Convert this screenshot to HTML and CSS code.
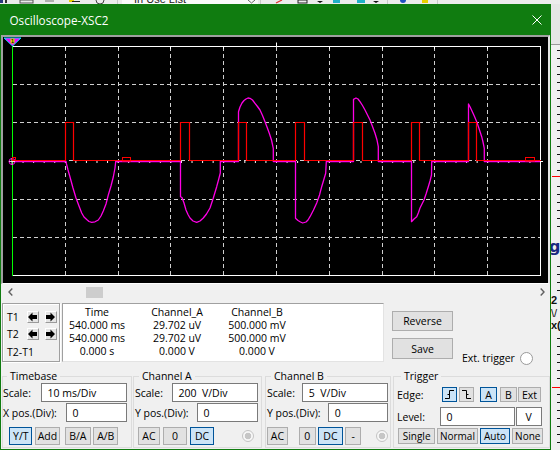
FILE: index.html
```html
<!DOCTYPE html>
<html>
<head>
<meta charset="utf-8">
<title>Oscilloscope-XSC2</title>
<link rel="stylesheet" href="styles.css">
</head>
<body>
<svg class="toolbar-strip" width="560" height="4" viewBox="0 0 560 4">
  <rect width="560" height="4" fill="#ececec"/>
  <rect x="0" y="0" width="3" height="3" fill="#2a3a7a"/>
  <rect x="5" y="0" width="2" height="3" fill="#333"/>
  <rect x="20" y="0" width="13" height="3" fill="none" stroke="#555" stroke-width="1"/>
  <rect x="45" y="0" width="9" height="2" fill="#b0b0b0"/>
  <rect x="69" y="0" width="5" height="2" fill="#e8d000"/>
  <rect x="72" y="1" width="8" height="1" fill="#222"/>
  <circle cx="100" cy="0" r="4" fill="none" stroke="#444" stroke-width="1"/>
  <rect x="117" y="0" width="1" height="4" fill="#c8c8c8"/>
  <rect x="122" y="0" width="136" height="4" fill="#fafafa"/>
  <text x="134" y="3" font-family="Liberation Sans, sans-serif" font-size="11" fill="#222">In Use List</text>
  <path d="M248 0 L251.5 3 L255 0" fill="none" stroke="#666" stroke-width="1"/>
  <rect x="260" y="0" width="1" height="4" fill="#c8c8c8"/>
  <path d="M276 3 L282 0" stroke="#e03030" stroke-width="1.2"/>
  <rect x="298" y="0" width="9" height="3" fill="none" stroke="#222" stroke-width="1"/>
  <path d="M317 1 H323 L320 3 Z" fill="#111"/>
  <rect x="333" y="0" width="7" height="3" fill="#20b0c8"/>
  <rect x="357" y="0" width="8" height="3" fill="#20b0c8"/>
  <path d="M373 1 H379 L376 3 Z" fill="#111"/>
  <rect x="387" y="0" width="1" height="4" fill="#c8c8c8"/>
  <circle cx="403" cy="0" r="3" fill="#2050c0"/>
  <rect x="422" y="0" width="6" height="3" fill="#e8d000"/>
  <rect x="437" y="0" width="1" height="4" fill="#c8c8c8"/>
</svg>

<svg class="bg-app" width="9" height="446" viewBox="551 4 9 446">
  <rect x="551" y="4" width="9" height="446" fill="#f0f0f0"/>
  <rect x="551" y="4" width="9" height="40" fill="#e6e6e6"/>
  <rect x="551" y="44" width="9" height="1" fill="#9a9a9a"/>
  <g fill="#111">
    <rect x="557" y="50" width="3" height="1"/><rect x="557" y="58" width="3" height="1"/>
    <rect x="557" y="66" width="3" height="1"/><rect x="557" y="74" width="3" height="1"/>
    <rect x="557" y="82" width="3" height="1"/><rect x="557" y="90" width="3" height="1"/>
    <rect x="557" y="98" width="3" height="1"/><rect x="557" y="106" width="3" height="1"/>
    <rect x="557" y="114" width="3" height="1"/><rect x="557" y="122" width="3" height="1"/>
    <rect x="557" y="130" width="3" height="1"/><rect x="557" y="138" width="3" height="1"/>
    <rect x="557" y="146" width="3" height="1"/><rect x="557" y="154" width="3" height="1"/>
    <rect x="557" y="162" width="3" height="1"/><rect x="557" y="170" width="3" height="1"/>
    <rect x="557" y="186" width="3" height="1"/><rect x="557" y="194" width="3" height="1"/>
    <rect x="557" y="202" width="3" height="1"/><rect x="557" y="210" width="3" height="1"/>
    <rect x="557" y="218" width="3" height="1"/><rect x="557" y="226" width="3" height="1"/>
    <rect x="557" y="266" width="3" height="1"/><rect x="557" y="274" width="3" height="1"/>
    <rect x="557" y="282" width="3" height="1"/><rect x="557" y="290" width="3" height="1"/>
    <rect x="557" y="338" width="3" height="1"/><rect x="557" y="346" width="3" height="1"/>
    <rect x="557" y="354" width="3" height="1"/><rect x="557" y="362" width="3" height="1"/>
    <rect x="557" y="370" width="3" height="1"/><rect x="557" y="378" width="3" height="1"/>
    <rect x="557" y="394" width="3" height="1"/><rect x="557" y="402" width="3" height="1"/>
    <rect x="557" y="410" width="3" height="1"/><rect x="557" y="418" width="3" height="1"/>
    <rect x="557" y="426" width="3" height="1"/><rect x="557" y="434" width="3" height="1"/>
    <rect x="557" y="442" width="3" height="1"/>
  </g>
  <rect x="552" y="176" width="8" height="1" fill="#ff0000"/>
  <rect x="552" y="387" width="8" height="1" fill="#ff0000"/>
  <text x="549" y="252" font-family="DejaVu Sans, sans-serif" font-weight="bold" font-size="16" fill="#1c2a80">g</text>
  <text x="551" y="304" font-family="Liberation Sans, sans-serif" font-weight="bold" font-size="11" fill="#111">2</text>
  <text x="551" y="317" font-family="Liberation Sans, sans-serif" font-size="11" fill="#111">\/</text>
  <text x="551" y="329" font-family="Liberation Sans, sans-serif" font-weight="bold" font-size="11" fill="#111">x(</text>
</svg>

<div class="window">
  <div class="titlebar">
    <span class="title">Oscilloscope-XSC2</span>
    <svg class="close" width="10" height="10" viewBox="0 0 10 10">
      <path d="M0.5 0.5 L9.5 9.5 M9.5 0.5 L0.5 9.5" stroke="#fff" stroke-width="1"/>
    </svg>
  </div>

  <div class="screen">
    <svg width="545" height="246" viewBox="3 37 545 246">
      <rect x="3" y="37" width="545" height="246" fill="#000"/>
      <g stroke="#cfcfcf" stroke-width="1" stroke-dasharray="4 3" fill="none">
        <path d="M65.5 47 V275 M118.5 47 V275 M170.5 47 V275 M223.5 47 V275 M276.5 47 V275 M329.5 47 V275 M382.5 47 V275 M434.5 47 V275 M487.5 47 V275"/>
        <path d="M13 84.5 H540 M13 122.5 H540 M13 199.5 H540 M13 237.5 H540 M13 160.5 H540"/>
      </g>
      <line x1="12" y1="162" x2="541" y2="162" stroke="#fff" stroke-width="2" stroke-dasharray="1 9.56"/>
      <rect x="12.5" y="46.5" width="528" height="229" fill="none" stroke="#fff" stroke-width="1"/>
      <g stroke="#fff" stroke-width="1">
        <path d="M276.5 42.5 V46 M540 161.5 H543 M65.5 47 V49 M118.5 47 V49 M170.5 47 V49 M223.5 47 V49 M329.5 47 V49 M382.5 47 V49 M434.5 47 V49 M487.5 47 V49"/>
      </g>
      <polyline fill="none" stroke="#ff00e6" stroke-width="1.3" stroke-linejoin="round" points="
        12,161.5 66,161.5 66.5,164 68,170 70,177 73,188 76,198 79,206 81.7,213 84,217 86.7,219.5 89,221.5 91.7,222.3 95,221.8 98.3,220 101,216 103.3,211 106,204 108.3,195 111,186 113.3,177 115,168 115.7,161.5
        180.5,161.5 180.5,196.7 182,197.5 184,203 186,210 188,214.5 190,218 193,221 196.7,222.3 200,221 203.3,218 206.5,214 210,208 213,199 216.7,186.7 218.5,180 220.3,173 220.3,161.5
        238.5,161.5 238.5,111.7 240,107 242,103 244,100.5 246,99 248,98 250,98.3 252.5,100 255,103.3 257.5,106.5 260,110 262.5,115.5 265,121.7 267,127 269.3,133.3 271.5,140 273.3,148.3 273.3,161.5
        295.5,161.5 295.5,218.3 298,220.5 300.5,222 302.7,223 306,222 308,220 310,216.7 313.5,210 316.7,203 319.5,195 321.7,186.7 324,179 325.7,173.3 326.3,161.5
        353.5,161.5 353.5,99.3 356,98 358,99 360,101.7 362.5,105.5 365,110 367.5,115 370,120 372.5,126.5 375,133.3 377,140 378.3,146.7 378.3,161.5
        411.5,161.5 411.5,221.7 414,219 416.7,216.7 418.5,212.5 420,208 422,204 424,200 426.2,193.5 428.3,186.7 430,181 431.5,175 431.7,161.5
        468.5,161.5 468.5,104 470,106.7 472,111 474.5,116.5 476.7,121.7 479,128.5 481.7,136.7 483,142 484.3,148.3 484.3,161.5 540,161.5"/>
      <path fill="none" stroke="#ff0000" stroke-width="1.2" d="M13 160.5 H65.5 V122.5 H73.5 V160.5 H180.5 V122.5 H189.5 V160.5 H238.5 V122.5 H246.5 V160.5 H295.5 V122.5 H304.5 V160.5 H353.5 V122.5 H362.5 V160.5 H411.5 V122.5 H419.5 V160.5 H468.5 V122.5 H476.5 V160.5 H541"/>
      <rect x="122.5" y="157.5" width="8" height="3.5" fill="none" stroke="#ff0000" stroke-width="1"/>
      <rect x="525.5" y="157.5" width="9" height="3.5" fill="none" stroke="#ff0000" stroke-width="1"/>
      <line x1="12.5" y1="45" x2="12.5" y2="276" stroke="#00ff00" stroke-width="1"/>
      <circle cx="12" cy="161.5" r="3" fill="none" stroke="#ff00e6" stroke-width="1"/>
      <path d="M9 161.5 H15 M12 158.5 V164.5" stroke="#ffffff" stroke-width="0.8"/>
      <rect x="12.5" y="157.5" width="3" height="3" fill="none" stroke="#ff0000" stroke-width="1"/>
      <polygon points="4,38 21,38 12.5,46" fill="#ff00ff" stroke="#00e0ff" stroke-width="1"/>
      <rect x="10.5" y="38.5" width="4" height="5" fill="#d8d800"/>
      <text x="12.5" y="43.3" text-anchor="middle" font-family="DejaVu Sans, sans-serif" font-size="5.5" fill="#000">1</text>
    </svg>
  </div>

  <div class="hscroll">
    <svg class="chev-l" width="5" height="8" viewBox="0 0 5 8"><path d="M4.3 0.5 L1 4 L4.3 7.5" fill="none" stroke="#606060" stroke-width="1.4"/></svg>
    <div class="thumb"></div>
    <svg class="chev-r" width="5" height="8" viewBox="0 0 5 8"><path d="M0.7 0.5 L4 4 L0.7 7.5" fill="none" stroke="#606060" stroke-width="1.4"/></svg>
  </div>

  <div class="cursor-row">
    <div class="tbox">
      <div class="trow">
        <span class="tlabel">T1</span>
        <span class="abtn"><svg width="9" height="10" viewBox="0 0 9 10"><path d="M0 5 L4.5 0.5 V3 H9 V7 H4.5 V9.5 Z" fill="#000"/></svg></span>
        <span class="abtn right"><svg width="9" height="10" viewBox="0 0 9 10"><path d="M9 5 L4.5 0.5 V3 H0 V7 H4.5 V9.5 Z" fill="#000"/></svg></span>
      </div>
      <div class="trow second">
        <span class="tlabel">T2</span>
        <span class="abtn"><svg width="9" height="10" viewBox="0 0 9 10"><path d="M0 5 L4.5 0.5 V3 H9 V7 H4.5 V9.5 Z" fill="#000"/></svg></span>
        <span class="abtn right"><svg width="9" height="10" viewBox="0 0 9 10"><path d="M9 5 L4.5 0.5 V3 H0 V7 H4.5 V9.5 Z" fill="#000"/></svg></span>
      </div>
      <div class="tdiff">T2-T1</div>
    </div>

    <div class="readout">
      <span>Time</span><span>Channel_A</span><span>Channel_B</span>
      <span>540.000 ms</span><span>29.702 uV</span><span>500.000 mV</span>
      <span>540.000 ms</span><span>29.702 uV</span><span>500.000 mV</span>
      <span>0.000 s</span><span>0.000 V</span><span>0.000 V</span>
    </div>

    <div class="side-btns">
      <div class="btn wide reverse">Reverse</div>
      <div class="btn wide save">Save</div>
    </div>

    <div class="ext">
      <span>Ext. trigger</span>
      <span class="radio"></span>
    </div>
  </div>

  <div class="groups">
    <fieldset class="grp timebase">
      <legend>Timebase</legend>
      <div class="row r1"><span class="lbl">Scale:</span><div class="field" style="width:86px">10 ms/Div</div></div>
      <div class="row r2"><span class="lbl">X pos.(Div):</span><div class="field" style="width:61px">0</div></div>
      <div class="row r3">
        <div class="btn on tb-yt">Y/T</div>
        <div class="btn tb-add">Add</div>
        <div class="btn tb-ba">B/A</div>
        <div class="btn tb-ab">A/B</div>
      </div>
    </fieldset>

    <fieldset class="grp cha">
      <legend>Channel A</legend>
      <div class="row r1"><span class="lbl">Scale:</span><div class="field" style="width:86px">200  V/Div</div></div>
      <div class="row r2"><span class="lbl">Y pos.(Div):</span><div class="field" style="width:61px">0</div></div>
      <div class="row r3">
        <div class="btn a-ac">AC</div>
        <div class="btn a-0">0</div>
        <div class="btn on a-dc">DC</div>
        <span class="dot a-dot"></span>
      </div>
    </fieldset>

    <fieldset class="grp chb">
      <legend>Channel B</legend>
      <div class="row r1"><span class="lbl">Scale:</span><div class="field" style="width:86px">5  V/Div</div></div>
      <div class="row r2"><span class="lbl">Y pos.(Div):</span><div class="field" style="width:60px">0</div></div>
      <div class="row r3">
        <div class="btn b-ac">AC</div>
        <div class="btn b-0">0</div>
        <div class="btn on b-dc">DC</div>
        <div class="btn b-minus">-</div>
        <span class="dot b-dot"></span>
      </div>
    </fieldset>

    <fieldset class="grp trig">
      <legend>Trigger</legend>
      <div class="row t1">
        <span class="lbl edge-lbl">Edge:</span>
        <div class="btn on e-rise"><svg width="11" height="11" viewBox="0 0 11 11"><path d="M1 9.5 H5.5 V1.5 H10 M3.5 5.5 H5.5" fill="none" stroke="#000" stroke-width="1"/></svg></div>
        <div class="btn e-fall"><svg width="11" height="11" viewBox="0 0 11 11"><path d="M1 1.5 H5.5 V9.5 H10 M5.5 5.5 H7.5" fill="none" stroke="#000" stroke-width="1"/></svg></div>
        <div class="btn on e-a">A</div>
        <div class="btn e-b">B</div>
        <div class="btn e-ext">Ext</div>
      </div>
      <div class="row t2">
        <span class="lbl level-lbl">Level:</span>
        <div class="field" style="width:75px">0</div>
        <div class="field unit" style="width:26px">V</div>
      </div>
      <div class="row t3">
        <div class="btn m-single">Single</div>
        <div class="btn m-normal">Normal</div>
        <div class="btn on m-auto">Auto</div>
        <div class="btn m-none">None</div>
      </div>
    </fieldset>
  </div>
</div>
</body>
</html>
```

FILE: styles.css
```css
* { box-sizing: border-box; }
html, body { margin: 0; padding: 0; }
body {
  width: 560px;
  height: 450px;
  overflow: hidden;
  position: relative;
  background: #f0f0f0;
  font-family: "Open Sans", "Noto Sans", sans-serif;
  font-size: 10.5px;
  color: #000;
}

.toolbar-strip { position: absolute; left: 0; top: 0; display: block; }
.bg-app { position: absolute; left: 551px; top: 4px; display: block; }

.window {
  position: absolute;
  left: 0;
  top: 4px;
  width: 551px;
  height: 446px;
  border: 1px solid #107c10;
  border-top: 0;
  background: #f0f0f0;
  display: flex;
  flex-direction: column;
}

.titlebar {
  height: 31px;
  flex: none;
  background: #107c10;
  color: #fff;
  display: flex;
  align-items: center;
  padding-left: 8.5px;
}
.title { font-size: 11.7px; line-height: 14px; }
.close { margin-left: auto; margin-right: 8px; display: block; }

.screen {
  height: 249px;
  flex: none;
  border-style: solid;
  border-width: 2px 2px 1px 2px;
  border-color: #a0a0a0 #e3e3e3 #ffffff #a0a0a0;
  background: #000;
}
.screen svg { display: block; }

.hscroll {
  height: 16px;
  flex: none;
  display: flex;
  align-items: center;
}
.chev-l { margin-left: 7px; display: block; }
.thumb { margin-left: 73px; width: 17px; height: 11px; background: #cdcdcd; }
.chev-r { margin-left: auto; margin-right: 5px; display: block; }

.cursor-row {
  height: 65px;
  flex: none;
  display: flex;
  align-items: flex-start;
  padding-top: 3px;
}

.tbox {
  margin-left: 1px;
  width: 58px;
  height: 59px;
  border: 1px solid #a0a0a0;
  box-shadow: inset 1px 1px 0 #fff, 1px 1px 0 #fff;
  padding: 7px 0 0 4px;
}
.trow { display: flex; align-items: center; height: 12px; }
.trow.second { margin-top: 5px; }
.tlabel { width: 20px; line-height: 14px; }
.abtn {
  width: 11.5px;
  height: 12px;
  background: #e4e4e4;
  border: 1px solid;
  border-color: #ffffff #9a9a9a #9a9a9a #ffffff;
  display: flex;
  align-items: center;
  justify-content: center;
}
.abtn svg { display: block; }
.abtn.right { margin-left: 6.5px; }
.tdiff { margin-top: 5px; line-height: 14px; }

.readout {
  margin-left: 2px;
  width: 322px;
  height: 59px;
  background: #fff;
  border: 1px solid;
  border-color: #a0a0a0 #e3e3e3 #e3e3e3 #a0a0a0;
  padding-top: 2px;
  display: grid;
  grid-template-columns: 68px 92px 68px;
  grid-auto-rows: 13px;
  line-height: 13px;
  text-align: center;
  white-space: nowrap;
}

.side-btns { margin-left: 8px; width: 61px; display: flex; flex-direction: column; }
.btn {
  height: 100%;
  background: #e1e1e1;
  border: 1px solid #adadad;
  display: flex;
  align-items: center;
  justify-content: center;
  white-space: pre;
  line-height: 12px;
  flex: none;
}
.btn.on { background: #cce4f7; border-color: #005499; }
.btn svg { display: block; }
.btn.wide.reverse { margin-top: 8px; height: 20px; }
.btn.wide.save { margin-top: 7px; height: 21px; }

.ext {
  margin-left: 9px;
  margin-top: 48px;
  display: flex;
  align-items: center;
  height: 14px;
  line-height: 14px;
}
.radio {
  margin-left: 5px;
  width: 13px;
  height: 13px;
  border-radius: 50%;
  border: 1px solid #9a9a9a;
  background: #fff;
}

.groups {
  height: 84px;
  flex: none;
  display: flex;
  align-items: flex-start;
  padding-top: 5px;
}
.grp {
  margin: 0;
  min-width: 0;
  flex: none;
  height: 78px;
  border: 1px solid #dcdcdc;
  padding: 0 0 2.5px 0;
  display: block;
}
.grp legend {
  margin-left: 4px;
  padding: 0 3px;
  line-height: 13px;
  font-size: 10.5px;
}
.row { display: flex; align-items: center; }
.row.r1 { height: 19px; }
.row.r2 { height: 19px; margin-top: 1px; }
.row.r3 { height: 18px; margin-top: 4.5px; }
.lbl { line-height: 14px; white-space: nowrap; }
.field {
  height: 100%;
  margin-left: auto;
  background: #fff;
  border: 1px solid #7a7a7a;
  padding-left: 5.5px;
  display: flex;
  align-items: center;
  white-space: pre;
  line-height: 14px;
  flex: none;
}

.timebase { margin-left: 1px; width: 130px; padding-right: 4px; }
.tb-yt { margin-left: 6.3px; width: 23px; }
.tb-add { margin-left: 2.7px; width: 25px; }
.tb-ba { margin-left: 5px; width: 25.7px; }
.tb-ab { margin-left: 2.6px; width: 25px; }

.cha { margin-left: 1px; width: 129px; padding-left: 1px; padding-right: 3px; }
.a-ac { margin-left: 2.7px; width: 22.6px; }
.a-0 { margin-left: 3px; width: 23.4px; }
.a-dc { margin-left: 3.3px; width: 24.3px; }

.chb { margin-left: 3px; width: 126px; padding-left: 1px; padding-right: 1.7px; }
.b-ac { margin-left: 0; width: 21px; }
.b-0 { margin-left: 10.7px; width: 17.3px; }
.b-dc { margin-left: 2.3px; width: 24.4px; }
.b-minus { margin-left: 2.6px; width: 15.7px; }

.dot {
  margin-left: auto;
  width: 12px;
  height: 12px;
  border-radius: 50%;
  border: 1px solid #c4c4c4;
  background: radial-gradient(circle, #c6c6c6 0 3px, #f7f7f7 3.6px);
  flex: none;
}
.a-dot { margin-right: 4.3px; }
.b-dot { margin-right: 0; }

.trig { margin-left: 2px; width: 157px; padding-left: 3px; padding-bottom: 3px; }
.row.t1 { height: 15px; margin-top: 4px; }
.row.t2 { height: 19px; margin-top: 5px; }
.row.t3 { height: 16px; margin-top: 2px; }
.edge-lbl { width: 44.7px; flex: none; }
.e-rise { width: 15px; }
.e-fall { margin-left: 2.6px; width: 15px; }
.e-a { margin-left: 5.7px; width: 17.3px; }
.e-b { margin-left: 2.7px; width: 16.7px; }
.e-ext { margin-left: 1.6px; width: 22.7px; }
.level-lbl { width: 43px; flex: none; }
.t2 .field { margin-left: 0; }
.t2 .field.unit { margin-left: 0.7px; padding-left: 0; justify-content: center; }
.t3 .btn { font-size: 10px; }
.m-single { margin-left: 1.3px; width: 36.7px; }
.m-normal { margin-left: 2.3px; width: 40.4px; }
.m-auto { margin-left: 2.3px; width: 30px; }
.m-none { margin-left: 2.3px; width: 31px; }
```
